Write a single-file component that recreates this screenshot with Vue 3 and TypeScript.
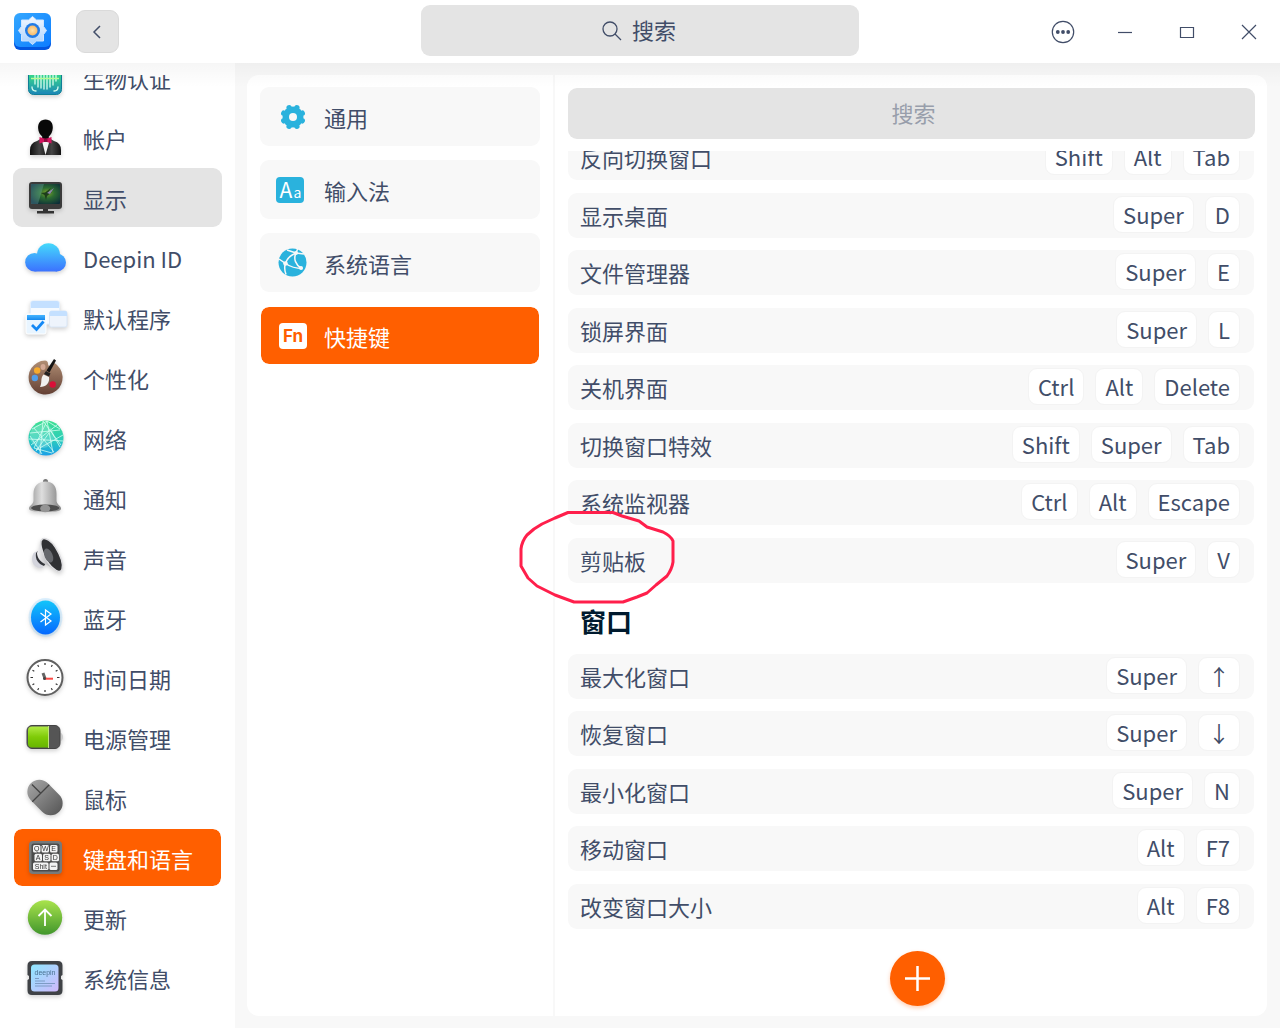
<script setup lang="ts">
import { ref } from 'vue'

interface NavItem {
  id: string
  label: string
  art: string
}

interface Shortcut {
  name: string
  keys: string[]
}

const modules: NavItem[] = [
  {
    id: 'biometric',
    label: '生物认证',
    art: `<defs><linearGradient id="bio" x2="0" y2="1"><stop stop-color="#3be08a"/><stop offset=".45" stop-color="#35d590"/><stop offset="1" stop-color="#1b84b8"/></linearGradient></defs>
      <rect x="7.500" y="7.500" width="33" height="33" rx="5" fill="url(#bio)" stroke="#0f7f97"/>
      <g stroke="#d9fff0" stroke-width="1.300" stroke-linecap="round" fill="none"><path d="M14 14v16M17 12v21M20 14v20M23 12v23M26 13v22M29 13v20M32 13v18M35 14v13"/><path d="M11 33q0 4 4 4M37 33q0 4-4 4"/></g>
      <path d="M10 24.500h28" stroke="#b9ff9a" stroke-width="1.500"/>`,
  },
  {
    id: 'account',
    label: '帐户',
    art: `<defs><linearGradient id="suit" x2="1"><stop stop-color="#111"/><stop offset=".3" stop-color="#444"/><stop offset=".5" stop-color="#222"/><stop offset=".7" stop-color="#444"/><stop offset="1" stop-color="#111"/></linearGradient></defs>
      <path d="M9 41v-5q0-7 7-9l5-3h7l5 3q7 2 7 9v5z" fill="url(#suit)"/>
      <path d="M21 27l3.500 14 4-14z" fill="#f2f2f2"/>
      <path d="M24.500 5.500c5 0 7.500 3.500 7.300 8.500-.2 4-2 7-4 8.500v3h-6.600v-3c-2-1.500-4-4.500-4.100-8.500-.1-5 2.500-8.500 7.400-8.500z" fill="#080808"/>
      <path d="M18.500 23l6 2 6-2v6.500l-6-2-6 2z" fill="#d4145f"/><rect x="23" y="24.500" width="3.500" height="3.500" fill="#8d0a3e"/>`,
  },
  {
    id: 'display',
    label: '显示',
    art: `<defs><radialGradient id="scr" cx=".55" cy=".45" r=".65"><stop stop-color="#7da52a"/><stop offset=".4" stop-color="#2c6b32"/><stop offset="1" stop-color="#0b2c38"/></radialGradient></defs>
      <rect x="8" y="8" width="33" height="27" rx="3" fill="#3b3b3b"/><rect x="10" y="10" width="29" height="20" rx="1" fill="url(#scr)"/>
      <path d="M10 10h13l-6 20h-7z" fill="#8ed0d8" opacity=".25"/>
      <path d="M20 19l4-.5 6-4.500-3 5 4-1-5 4-1 4-1.500-5z" fill="#1d3d1b"/><path d="M26 19l7-5-4 6z" fill="#8f86b0"/>
      <path d="M22 35h5v2h6v2.500H16V37h6z" fill="#333"/>`,
  },
  {
    id: 'deepin-id',
    label: 'Deepin ID',
    art: `<defs><linearGradient id="cloud" gradientUnits="userSpaceOnUse" x1="0" y1="9" x2="0" y2="38"><stop stop-color="#45dbfb"/><stop offset="1" stop-color="#3b70ff"/></linearGradient></defs>
      <g fill="url(#cloud)"><circle cx="27.500" cy="20.700" r="11.500"/><circle cx="13.500" cy="28.200" r="9.300"/><circle cx="36" cy="28.500" r="9"/><path d="M13.500 24H36v13.500H13.500z"/></g>`,
  },
  {
    id: 'default-apps',
    label: '默认程序',
    art: `<defs><linearGradient id="tab" x2="0" y2="1"><stop stop-color="#46b5ff"/><stop offset="1" stop-color="#1688ee"/></linearGradient></defs>
      <rect x="9.500" y="7" width="29" height="23" rx="2" fill="#f5faff" stroke="#e2effd"/><path d="M10 14V9q0-2 2-2h24q2 0 2 2v5z" fill="#c4e0ff"/>
      <rect x="28.500" y="17" width="17.500" height="16" rx="2" fill="#eef4fc" stroke="#d9e6f6"/><path d="M28.500 22v-3q0-2 2-2h13.500q2 0 2 2v3z" fill="#c4e0ff"/>
      <rect x="5" y="20" width="20" height="20" rx="2" fill="#e9f5ff" stroke="#fff"/><path d="M6 21h18v5H6z" fill="url(#tab)"/>
      <path d="M11 31l4.500 4.500 7-8" fill="none" stroke="#1488f5" stroke-width="2.800"/>`,
  },
  {
    id: 'personalization',
    label: '个性化',
    art: `<defs><linearGradient id="wood" x2="0" y2="1"><stop stop-color="#b08e74"/><stop offset="1" stop-color="#633f33"/></linearGradient></defs>
      <path d="M24 6.500c2 0 3 1.500 3 3.500s1.500 2.500 4 1l2.500-2A17 17 0 1 1 24 6.500z" fill="url(#wood)"/>
      <ellipse cx="22" cy="13" rx="2.500" ry="3" fill="#d3a995"/><circle cx="16.200" cy="16.500" r="3.200" fill="#f6ab2d"/><circle cx="13.800" cy="24" r="3.200" fill="#529fe9"/><circle cx="31.700" cy="30.500" r="3.200" fill="#d90f38"/>
      <path d="M33 5l2 1.500-6.500 12-3-2z" fill="#151515"/><path d="M25 17l4.500 2.500-1.500 3-5-2.500z" fill="#222"/>
      <path d="M22.500 20.500l5.500 2.500c1 6-3 10-9 10 2.500-5 0-8.500 3.500-12.500z" fill="#f1f1ef"/>`,
  },
  {
    id: 'network',
    label: '网络',
    art: `<defs><linearGradient id="net" x2="0" y2="1"><stop stop-color="#3fe091"/><stop offset=".55" stop-color="#2bcdbb"/><stop offset="1" stop-color="#1a9fe8"/></linearGradient></defs>
      <circle cx="25" cy="24" r="17.500" fill="url(#net)"/><circle cx="21" cy="22" r="12" fill="#fff" opacity=".2"/>
      <path d="M11 15L26 7 39 15M22 7L40 31M26 7L13 34M26 7l6 32M22 7l-3 33M9 19l30-3M8 25l34 2M15 36L42 21M13 34l18 5M10 31L36 11M30 17l9 16M28 19L15 37M13 14l20 24M9 22l12 18" fill="none" stroke="#d7fff5" stroke-width=".9" opacity=".85"/>`,
  },
  {
    id: 'notification',
    label: '通知',
    art: `<defs><linearGradient id="bell" x2="1"><stop stop-color="#969696"/><stop offset=".4" stop-color="#dedede"/><stop offset="1" stop-color="#838383"/></linearGradient></defs>
      <circle cx="24.500" cy="7.500" r="2.500" fill="#777"/>
      <path d="M24.500 7.500c8 0 11 5 11 12v7c0 4 4.500 5 4.500 8 0 2-3 3.500-15.500 3.500S8 36.500 8 34.500c0-3 4.500-4 4.500-8v-7c0-7 4-12 12-12z" fill="url(#bell)"/>
      <ellipse cx="24.200" cy="34" rx="14" ry="3.500" fill="#4d4d4d"/><ellipse cx="24.200" cy="34.500" rx="5" ry="3.800" fill="#949494"/>`,
  },
  {
    id: 'sound',
    label: '声音',
    art: `<defs><linearGradient id="horn" x2="1"><stop stop-color="#f2f2f4"/><stop offset="1" stop-color="#85868a"/></linearGradient></defs>
      <path d="M14 18c-4 3-4 10 0 14 2 2 6 2.500 8 1.500l-3-17z" fill="#d3d4dc"/><path d="M15 19c-1 6 2 11 8 13l2-3-6-14z" fill="#33353a"/>
      <path d="M20 5c-1 5-2 9-4 14 0 5 4 9 8 11 5 2 9 6 14 8z" fill="url(#horn)"/>
      <path d="M21.500 4.800c3-1.500 9 2 13 8.500 5 8 8 17 6.500 22-1 3.500-5 2.500-8-.5C26 30 18.500 14 20 7z" fill="#303134" stroke="#dedee1" stroke-width="1.500"/>
      <ellipse cx="27.500" cy="21.500" rx="4" ry="7.500" transform="rotate(-24 27.500 21.500)" fill="#66686d"/>`,
  },
  {
    id: 'bluetooth',
    label: '蓝牙',
    art: `<defs><linearGradient id="bt" x2="0" y2="1"><stop stop-color="#12c5fa"/><stop offset="1" stop-color="#0568ff"/></linearGradient></defs>
      <ellipse cx="24.500" cy="23.500" rx="17" ry="19.500" fill="#8fd1ff" opacity=".3"/><ellipse cx="24.500" cy="23.500" rx="14.500" ry="17" fill="url(#bt)"/>
      <path d="M19.500 19l10.500 8-5.500 4V16l5.500 4-10.500 8" fill="none" stroke="#fff" stroke-width="1.200"/>`,
  },
  {
    id: 'datetime',
    label: '时间日期',
    art: `<circle cx="24" cy="23.500" r="17.500" fill="#fff" stroke="#606060" stroke-width="2"/>
      <g stroke="#333" stroke-width="1.200"><path d="M24 9v2M24 36v2M9.500 23.500h2.500M36 23.500h2.500M16.700 11l1 1.800M31.300 11l-1 1.800M16.700 36l1-1.800M31.300 36l-1-1.800M11.500 16.200l1.800 1M36.500 16.200l-1.800 1M11.500 30.800l1.800-1M36.500 30.800l-1.800-1"/></g>
      <path d="M24 24.500l-2-5.500" stroke="#666" stroke-width="3"/><path d="M24 24.700h8" stroke="#fb4b46" stroke-width="2"/><circle cx="23.500" cy="24.500" r="1.500" fill="#444"/>`,
  },
  {
    id: 'power',
    label: '电源管理',
    art: `<defs><linearGradient id="bat" x2="0" y2="1"><stop stop-color="#b0ea44"/><stop offset=".5" stop-color="#7fcb08"/><stop offset="1" stop-color="#67b600"/></linearGradient></defs>
      <path d="M38 18q4 1 4 5t-4 5z" fill="#ccc"/><rect x="6" y="11.500" width="33" height="23" rx="5" fill="#555" stroke="#444"/>
      <path d="M27 12.500v21H11q-4 0-4-4v-13q0-4 4-4z" fill="url(#bat)"/><path d="M27.500 12v22" stroke="#bfe57e"/>`,
  },
  {
    id: 'mouse',
    label: '鼠标',
    art: `<defs><linearGradient id="mouse" x2="0" y2="1"><stop stop-color="#a0a0a0"/><stop offset="1" stop-color="#5c5c5c"/></linearGradient></defs>
      <g transform="rotate(-45 24 23.500)"><rect x="12" y="3.500" width="24" height="40" rx="12" fill="url(#mouse)"/><path d="M12 17.500h24M24 5v12.500" stroke="#444" stroke-width="1.300"/></g>`,
  },
  {
    id: 'keyboard',
    label: '键盘和语言',
    art: `<rect x="8" y="7" width="33" height="33" rx="4" fill="#777a7b"/><rect x="10.500" y="9.500" width="28" height="28" rx="2" fill="#4b4b4b"/>
      <g fill="#f3f3f3"><rect x="12" y="11" width="7.500" height="7.500" rx="1.500"/><rect x="20.500" y="11" width="7.500" height="7.500" rx="1.500"/><rect x="29" y="11" width="7.500" height="7.500" rx="1.500"/><rect x="13.500" y="19.700" width="7.500" height="7.500" rx="1.500"/><rect x="22" y="19.700" width="7.500" height="7.500" rx="1.500"/><rect x="30.500" y="19.700" width="7.500" height="7.500" rx="1.500"/><rect x="12" y="28.500" width="15.500" height="7.500" rx="1.500"/><rect x="28.500" y="28.500" width="8" height="7.500" rx="1.500"/></g>
      <g font-family="Liberation Sans, sans-serif" font-size="7" fill="#333" text-anchor="middle"><text x="15.800" y="17.300">Q</text><text x="24.200" y="17.300">W</text><text x="32.700" y="17.300">E</text><text x="17.200" y="26">A</text><text x="25.700" y="26">S</text><text x="34.200" y="26">D</text><text x="19.800" y="34.800">Shit</text></g><path d="M30 32.300h5" stroke="#777"/>`,
  },
  {
    id: 'update',
    label: '更新',
    art: `<defs><linearGradient id="up" x2="0" y2="1"><stop stop-color="#a9e34c"/><stop offset="1" stop-color="#41962c"/></linearGradient></defs>
      <circle cx="24" cy="23.500" r="17.200" fill="url(#up)"/><path d="M24 32V16M17.500 22l6.500-6.500 6.500 6.500" fill="none" stroke="#fff" stroke-width="1.800"/>`,
  },
  {
    id: 'system-info',
    label: '系统信息',
    art: `<defs><linearGradient id="chip" x2="1" y2="1"><stop stop-color="#8ee7ff"/><stop offset="1" stop-color="#d0b7fb"/></linearGradient></defs>
      <path d="M11 7h26q4.500 0 4.500 4.500V21l-1.500 1v3l1.500 1v10.500Q41.500 41 37 41H11q-4.500 0-4.500-4.500V26l1.500-1v-3l-1.500-1v-9.500Q6.500 7 11 7z" fill="#3f4246"/>
      <rect x="10" y="10.500" width="27.500" height="27" rx="3.500" fill="url(#chip)"/>
      <text x="24" y="20.500" font-family="Liberation Sans, sans-serif" font-size="7" fill="#4a7191" text-anchor="middle">deepin</text>
      <path d="M14 24.500h4M14 27h10M14 29.500h20M14 32h17" stroke="#7795bd" stroke-width=".9"/>`,
  },
]

const pages: NavItem[] = [
  {
    id: 'general',
    label: '通用',
    art: `<g fill="#2ab2dd" stroke="#2ab2dd" stroke-width="5.500" stroke-linecap="round"><circle cx="22" cy="22" r="10.500" stroke="none"/>
      <path d="M18.200 12.800l7.600 18.400M25.800 12.800l-7.600 18.400M12.800 18.200l18.400 7.600M12.800 25.800l18.400-7.600"/></g><circle cx="22" cy="22" r="4" fill="#f8f8f8"/>`,
  },
  {
    id: 'input-method',
    label: '输入法',
    art: `<rect x="5" y="9" width="28" height="26" rx="4" fill="#2ab2dd"/>
      <g font-family="Noto Sans CJK SC, sans-serif" fill="#fff"><text x="8.500" y="29.500" font-size="21">A</text><text x="22.500" y="29.500" font-size="14">a</text></g>`,
  },
  {
    id: 'system-language',
    label: '系统语言',
    art: `<circle cx="21.500" cy="21.500" r="14" fill="#2ab2dd"/>
      <path d="M24 12.500c-5 2-8 5-9.500 10 5 3.500 11 5 17 5M25 12c-3 6 0 12 5 15M8 18l6.500 4.500c-1.500 4-1 7 .5 11M25 12l8 1M25 12l-9-3M25 12l2-5" fill="none" stroke="#f8f8f8" stroke-width="1.500"/><circle cx="25" cy="12" r="2" fill="#f8f8f8"/><circle cx="14.500" cy="22.500" r="2.300" fill="#f8f8f8"/><circle cx="30" cy="27" r="2" fill="#f8f8f8"/>`,
  },
  {
    id: 'shortcuts',
    label: '快捷键',
    art: `<rect x="8" y="9" width="28" height="26" rx="4" fill="#fff"/>
      <text x="22" y="28" font-family="Inter, sans-serif" font-weight="700" font-size="17" fill="#ff5f00" text-anchor="middle">Fn</text>`,
  },
]

const systemShortcuts: Shortcut[] = [
  { name: '反向切换窗口', keys: ['Shift', 'Alt', 'Tab'] },
  { name: '显示桌面', keys: ['Super', 'D'] },
  { name: '文件管理器', keys: ['Super', 'E'] },
  { name: '锁屏界面', keys: ['Super', 'L'] },
  { name: '关机界面', keys: ['Ctrl', 'Alt', 'Delete'] },
  { name: '切换窗口特效', keys: ['Shift', 'Super', 'Tab'] },
  { name: '系统监视器', keys: ['Ctrl', 'Alt', 'Escape'] },
  { name: '剪贴板', keys: ['Super', 'V'] },
]

const windowShortcuts: Shortcut[] = [
  { name: '最大化窗口', keys: ['Super', '↑'] },
  { name: '恢复窗口', keys: ['Super', '↓'] },
  { name: '最小化窗口', keys: ['Super', 'N'] },
  { name: '移动窗口', keys: ['Alt', 'F7'] },
  { name: '改变窗口大小', keys: ['Alt', 'F8'] },
]

const activeModule = ref('keyboard')
const hoveredModule = ref('display')
const activePage = ref('shortcuts')
const query = ref('')
const shortcutQuery = ref('')
</script>

<template>
  <div class="window">
    <header class="titlebar">
      <div class="lead">
        <svg class="logo" viewBox="0 0 38 38" aria-hidden="true">
          <defs>
            <linearGradient id="logo-bg" x2="1" y2="1"><stop stop-color="#35a8ff" /><stop offset="1" stop-color="#0b7cff" /></linearGradient>
            <linearGradient id="logo-gear" x2="0" y2="1"><stop stop-color="#f3f8ff" /><stop offset="1" stop-color="#a9d2ff" /></linearGradient>
            <radialGradient id="logo-core"><stop stop-color="#ffe2a8" /><stop offset="1" stop-color="#f5b96b" /></radialGradient>
          </defs>
          <rect x="0" y="3" width="37" height="34" rx="6" fill="#0356e0" />
          <rect x="0" y="0" width="37" height="34" rx="6" fill="url(#logo-bg)" />
          <path d="M18.500 3.500l4 3.500h7v6.500l3 4-3 4V28h-7l-4 3.500-4-3.500h-7v-6.500l-3-4 3-4V7h7z" fill="url(#logo-gear)" stroke="#cfe5ff" stroke-linejoin="round" />
          <circle cx="18.500" cy="17.500" r="7.500" fill="#1f7be8" />
          <circle cx="18.500" cy="17.500" r="5" fill="url(#logo-core)" />
        </svg>
        <button class="back" type="button" aria-label="返回">
          <svg width="20" height="20" viewBox="0 0 20 20"><path d="M12 4L6 10l6 6" fill="none" stroke="#414d68" stroke-width="1.500" /></svg>
        </button>
      </div>
      <label class="search">
        <svg width="20" height="20" viewBox="0 0 20 20" aria-hidden="true"><circle cx="8" cy="8" r="7" /><path d="M13 13l6 6" /></svg>
        <input v-model="query" type="text" placeholder="搜索" aria-label="搜索设置" />
      </label>
      <div class="controls">
        <button type="button" aria-label="菜单">
          <svg viewBox="0 0 24 24"><circle cx="12" cy="12" r="10.700" /><g class="dots"><circle cx="6.800" cy="12" r="1.900" /><circle cx="12" cy="12" r="1.900" /><circle cx="17.200" cy="12" r="1.900" /></g></svg>
        </button>
        <button type="button" aria-label="最小化"><svg viewBox="0 0 24 24"><path d="M5 12.500h14" /></svg></button>
        <button type="button" aria-label="最大化"><svg viewBox="0 0 24 24"><path d="M5.500 7.500h13v10h-13z" /></svg></button>
        <button type="button" aria-label="关闭"><svg viewBox="0 0 24 24"><path d="M5 5l14 14M19 5L5 19" /></svg></button>
      </div>
    </header>

    <div class="body">
      <nav class="modules">
        <div class="modules-list">
          <button
            v-for="m in modules"
            :key="m.id"
            type="button"
            class="module"
            :class="{ active: m.id === activeModule, hovered: m.id === hoveredModule }"
            @click="activeModule = m.id"
            @mouseenter="hoveredModule = m.id"
          >
            <svg class="module-icon" viewBox="0 0 48 48" aria-hidden="true" v-html="m.art" />
            <span>{{ m.label }}</span>
          </button>
        </div>
      </nav>

      <div class="panel">
        <nav class="pages">
          <button
            v-for="p in pages"
            :key="p.id"
            type="button"
            class="page"
            :class="{ active: p.id === activePage }"
            @click="activePage = p.id"
          >
            <svg class="page-icon" viewBox="0 0 44 44" aria-hidden="true" v-html="p.art" />
            <span>{{ p.label }}</span>
          </button>
        </nav>

        <main class="detail">
          <input v-model="shortcutQuery" class="filter" type="text" placeholder="搜索" aria-label="搜索快捷键" />
          <div class="scroll">
            <ul class="shortcuts system">
              <li v-for="s in systemShortcuts" :key="s.name" class="shortcut">
                <span class="name">{{ s.name }}</span>
                <kbd v-for="k in s.keys" :key="k">{{ k }}</kbd>
              </li>
            </ul>
            <h2>窗口</h2>
            <ul class="shortcuts">
              <li v-for="s in windowShortcuts" :key="s.name" class="shortcut">
                <span class="name">{{ s.name }}</span>
                <kbd v-for="k in s.keys" :key="k">{{ k }}</kbd>
              </li>
            </ul>
          </div>
          <footer class="actions">
            <button class="add" type="button" aria-label="添加快捷键">
              <svg width="25" height="25" viewBox="0 0 25 25"><path d="M12.500 0v25M0 12.500h25" stroke="#fff" stroke-width="2.500" /></svg>
            </button>
          </footer>
        </main>

        <svg class="marker" viewBox="0 0 158 96" aria-hidden="true">
          <path d="M50 4.500H95l9 3.500 17 5 8 6 16 5q8 4 10 9l0 21q-1 7-6 14l-11 9-9 8-10 4-14 5H56l-19-7-18-9-9-8-7-12V41q1-8 6-14l7-6 8-5 13-6z" />
        </svg>
      </div>
    </div>
  </div>
</template>

<style>
body {
  background: #fff;
}
</style>

<style scoped>
.window {
  display: flex;
  flex-direction: column;
  height: 100vh;
  font-family: "Noto Sans CJK SC", "Noto Sans", sans-serif;
  font-size: 22px;
  line-height: 32px;
  color: #414d68;
}

button,
input {
  box-sizing: border-box;
  margin: 0;
  padding: 0;
  border: 0;
  background: none;
  font: inherit;
  color: inherit;
}

.titlebar {
  display: grid;
  grid-template-columns: 1fr 438px 1fr;
  align-items: center;
  height: 63px;
  flex: none;
  background: #fff;
}

.lead {
  display: flex;
  align-items: center;
  gap: 24px;
  padding-left: 14px;
}

.logo {
  width: 38px;
  height: 38px;
}

.back {
  display: grid;
  place-items: center;
  width: 43px;
  height: 43px;
  border: 1px solid #dadada;
  border-radius: 9px;
  background: #e4e4e4;
}

.search {
  display: flex;
  align-items: center;
  justify-content: center;
  gap: 10px;
  height: 51px;
  margin-bottom: 2px;
  border-radius: 9px;
  background: #e4e4e4;
}

.search svg {
  fill: none;
  stroke: #414d68;
  stroke-width: 1.3;
}

.search input {
  width: 46px;
  height: 36px;
  padding-bottom: 4px;
  outline: none;
}

.search input:focus {
  width: 50%;
}

.search input::placeholder {
  color: #414d68;
}

.controls {
  display: flex;
  justify-content: flex-end;
}

.controls button {
  display: grid;
  place-items: center;
  width: 62px;
  height: 62px;
}

.controls svg {
  width: 24px;
  height: 24px;
  fill: none;
  stroke: #414d68;
  stroke-width: 1.2;
}

.controls .dots {
  fill: #414d68;
  stroke: none;
}

.body {
  position: relative;
  display: flex;
  flex: 1;
  min-height: 0;
  background: #f8f8f8;
}

.body::before {
  content: "";
  position: absolute;
  z-index: 1;
  inset: 0 0 auto;
  height: 24px;
  background: linear-gradient(rgba(0, 0, 0, 0.036), rgba(0, 0, 0, 0));
  pointer-events: none;
}

.modules {
  flex: none;
  box-sizing: border-box;
  width: 235px;
  padding-top: 12px;
  background: #fff;
}

.modules-list {
  display: flex;
  flex-direction: column;
  gap: 1px;
  height: 100%;
  padding: 0 13px;
  overflow-y: auto;
  scrollbar-width: none;
}

.module {
  display: flex;
  flex: none;
  align-items: center;
  gap: 14px;
  height: 59px;
  padding-left: 8px;
  border-radius: 9px;
  text-align: left;
}

.module:first-child {
  margin-top: -27px;
}

.module.hovered {
  background: #e4e4e4;
}

.module.active {
  border: 1px solid #fff;
  padding-left: 7px;
  background: #ff5f00;
  background-clip: padding-box;
  color: #fff;
}

.module-icon {
  flex: none;
  width: 48px;
  height: 48px;
  filter: drop-shadow(0 2px 2px rgba(0, 0, 0, 0.18));
}

.panel {
  position: relative;
  display: flex;
  flex: 1;
  min-width: 0;
  margin: 12px 13px 12px 12px;
  border-radius: 12px;
  background: #fff;
}

.pages {
  display: flex;
  flex: none;
  flex-direction: column;
  gap: 14px;
  width: 280px;
  padding: 12px 13px;
  border-right: 2px solid #f8f8f8;
}

.page {
  display: flex;
  align-items: center;
  gap: 9px;
  height: 59px;
  padding-left: 11px;
  border-radius: 9px;
  background: #f8f8f8;
  text-align: left;
}

.page.active {
  border: 1px solid #fff;
  padding-left: 10px;
  background: #ff5f00;
  background-clip: padding-box;
  color: #fff;
}

.page-icon {
  width: 44px;
  height: 44px;
}

.detail {
  display: flex;
  flex: 1;
  flex-direction: column;
  min-width: 0;
  padding: 13px 0 0 13px;
}

.filter {
  height: 51px;
  flex: none;
  margin-right: 12px;
  padding: 0 0 4px 4px;
  border-radius: 9px;
  background: #e4e4e4;
  text-align: center;
  outline: none;
}

.filter::placeholder {
  color: #989eab;
}

.scroll {
  flex: 1;
  min-height: 0;
  margin-top: 12px;
  padding-right: 13px;
  overflow-y: auto;
  scrollbar-width: none;
}

.shortcuts {
  display: flex;
  flex-direction: column;
  gap: 12px;
  margin: 0;
  padding: 0;
  list-style: none;
}

.shortcuts.system {
  margin-top: -16px;
}

.shortcut {
  display: flex;
  box-sizing: border-box;
  align-items: center;
  gap: 11px;
  height: 45px;
  padding: 0 14px 2px 12px;
  border-radius: 9px;
  background: #f8f8f8;
}

.shortcuts.system .shortcut:nth-child(even),
.shortcuts:not(.system) .shortcut:nth-child(odd):not(:first-child) {
  margin-top: 1px;
}

.name {
  flex: 1;
}

kbd {
  box-sizing: border-box;
  height: 37px;
  padding: 0 9px;
  border: 1px solid #f3f3f3;
  border-radius: 9px;
  background: #fff;
  font-family: inherit;
  line-height: 34px;
}

h2 {
  margin: 0;
  padding: 20px 12px 15px;
  font-size: 26px;
  line-height: 36px;
  font-weight: 700;
  color: #001a2e;
}

.actions {
  display: flex;
  flex: none;
  justify-content: center;
  padding: 16px 0 10px;
}

.add {
  display: grid;
  place-items: center;
  width: 55px;
  height: 55px;
  border-radius: 50%;
  background: #ff5f00;
  box-shadow: 0 2px 4px rgba(255, 95, 0, 0.3);
}

.marker {
  position: absolute;
  top: 433px;
  left: 271px;
  width: 158px;
  height: 96px;
  fill: none;
  stroke: #ff1f4b;
  stroke-width: 3;
  stroke-linejoin: round;
  pointer-events: none;
}
</style>
